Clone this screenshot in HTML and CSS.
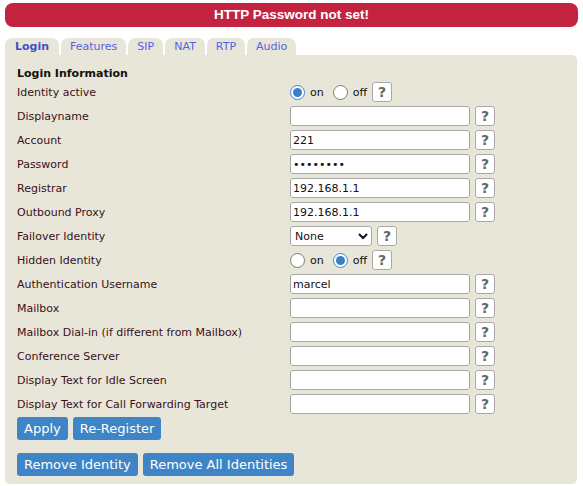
FILE: index.html
```html
<!DOCTYPE html>
<html>
<head>
<meta charset="utf-8">
<link rel="stylesheet" href="styles.css">
</head>
<body>
<div class="banner">HTTP Password not set!</div>
<div class="tabs">
  <div class="tab active">Login</div>
  <div class="tab">Features</div>
  <div class="tab">SIP</div>
  <div class="tab">NAT</div>
  <div class="tab">RTP</div>
  <div class="tab">Audio</div>
</div>
<div class="panel">
  <div class="title">Login Information</div>
  <div class="form">
    <div class="label">Identity active</div>
    <div class="ctrl"><input class="radio" type="radio" name="a" checked><span class="rl">on</span><input class="radio" type="radio" name="a"><span class="rl">off</span><span class="help">?</span></div>
    <div class="label">Displayname</div>
    <div class="ctrl"><input class="text" type="text" value=""><span class="help">?</span></div>
    <div class="label">Account</div>
    <div class="ctrl"><input class="text" type="text" value="221"><span class="help">?</span></div>
    <div class="label">Password</div>
    <div class="ctrl"><input class="text" type="password" value="12345678"><span class="help">?</span></div>
    <div class="label">Registrar</div>
    <div class="ctrl"><input class="text" type="text" value="192.168.1.1"><span class="help">?</span></div>
    <div class="label">Outbound Proxy</div>
    <div class="ctrl"><input class="text" type="text" value="192.168.1.1"><span class="help">?</span></div>
    <div class="label">Failover Identity</div>
    <div class="ctrl"><select class="sel"><option>None</option></select><span class="help">?</span></div>
    <div class="label">Hidden Identity</div>
    <div class="ctrl"><input class="radio" type="radio" name="h"><span class="rl">on</span><input class="radio" type="radio" name="h" checked><span class="rl">off</span><span class="help">?</span></div>
    <div class="label">Authentication Username</div>
    <div class="ctrl"><input class="text" type="text" value="marcel"><span class="help">?</span></div>
    <div class="label">Mailbox</div>
    <div class="ctrl"><input class="text" type="text" value=""><span class="help">?</span></div>
    <div class="label">Mailbox Dial-in (if different from Mailbox)</div>
    <div class="ctrl"><input class="text" type="text" value=""><span class="help">?</span></div>
    <div class="label">Conference Server</div>
    <div class="ctrl"><input class="text" type="text" value=""><span class="help">?</span></div>
    <div class="label">Display Text for Idle Screen</div>
    <div class="ctrl"><input class="text" type="text" value=""><span class="help">?</span></div>
    <div class="label">Display Text for Call Forwarding Target</div>
    <div class="ctrl"><input class="text" type="text" value=""><span class="help">?</span></div>
  </div>
  <div class="buttons">
    <button class="btn">Apply</button>
    <button class="btn">Re-Register</button>
  </div>
  <div class="buttons second">
    <button class="btn">Remove Identity</button>
    <button class="btn">Remove All Identities</button>
  </div>
</div>
</body>
</html>
```
FILE: styles.css
```css
html, body {
  margin: 0;
  padding: 0;
  background: #ffffff;
}
body {
  padding: 3px 5px 0 5px;
  font-family: "DejaVu Sans", Verdana, sans-serif;
  font-size: 11px;
  color: #3a1020;
}
.banner {
  height: 24px;
  line-height: 24px;
  background: #c4233f;
  color: #ffffff;
  font-family: "Liberation Sans", Arial, sans-serif;
  font-weight: bold;
  font-size: 13.5px;
  text-align: center;
  border-radius: 8px;
}
.tabs {
  display: flex;
  gap: 2px;
  margin-top: 11px;
  height: 17px;
}
.tab {
  background: #e8e6d9;
  border-radius: 7px 7px 0 0;
  padding: 0 9px;
  line-height: 18px;
  font-size: 11px;
  color: #5562e0;
}
.tab.active {
  font-weight: bold;
  color: #4150c8;
  padding: 0 10px;
}
.panel {
  background: #e8e6d9;
  width: 572px;
  height: 429px;
  border-radius: 0 5px 5px 5px;
  padding: 13px 0 0 12px;
  box-sizing: border-box;
}
.title {
  font-weight: bold;
  color: #111111;
  line-height: 12px;
}
.form {
  display: grid;
  grid-template-columns: 273px auto;
  grid-auto-rows: 24px;
}
.label {
  display: flex;
  align-items: center;
}
.ctrl {
  display: flex;
  align-items: center;
}
.text {
  width: 180px;
  height: 20px;
  box-sizing: border-box;
  border: 1px solid #a8a8a8;
  border-radius: 3px;
  padding: 0 2px;
  margin: 0;
  font-family: "DejaVu Sans", Verdana, sans-serif;
  font-size: 11px;
  color: #111;
  background: #fff;
  outline: none;
}
.help {
  width: 20px;
  height: 20px;
  box-sizing: border-box;
  border: 1px solid #a8a8a8;
  border-radius: 3px;
  background: #fff;
  margin-left: 5px;
  display: flex;
  align-items: center;
  justify-content: center;
  font-size: 14px;
  font-weight: bold;
  color: #666;
}
.radio {
  width: 15px;
  height: 15px;
  margin: 0;
  accent-color: #3a80c8;
}
.rl + .radio {
  margin-left: 9px;
}
.rl {
  margin: 0 0 0 5px;
  color: #111;
  font-size: 11px;
}
.sel {
  width: 82px;
  height: 20px;
  font-family: "DejaVu Sans", Verdana, sans-serif;
  font-size: 11px;
  border: 1px solid #a8a8a8;
  border-radius: 3px;
  background: #fff;
  color: #111;
  margin: 0;
}
.buttons {
  display: flex;
  gap: 5px;
  margin-top: 1px;
}
.buttons.second {
  margin-top: 13px;
}
.btn {
  height: 23px;
  border: none;
  border-radius: 3px;
  background: #3d85c6;
  color: #fff;
  font-family: "DejaVu Sans", Verdana, sans-serif;
  font-size: 13px;
  padding: 0 7px;
  margin: 0;
}
```
